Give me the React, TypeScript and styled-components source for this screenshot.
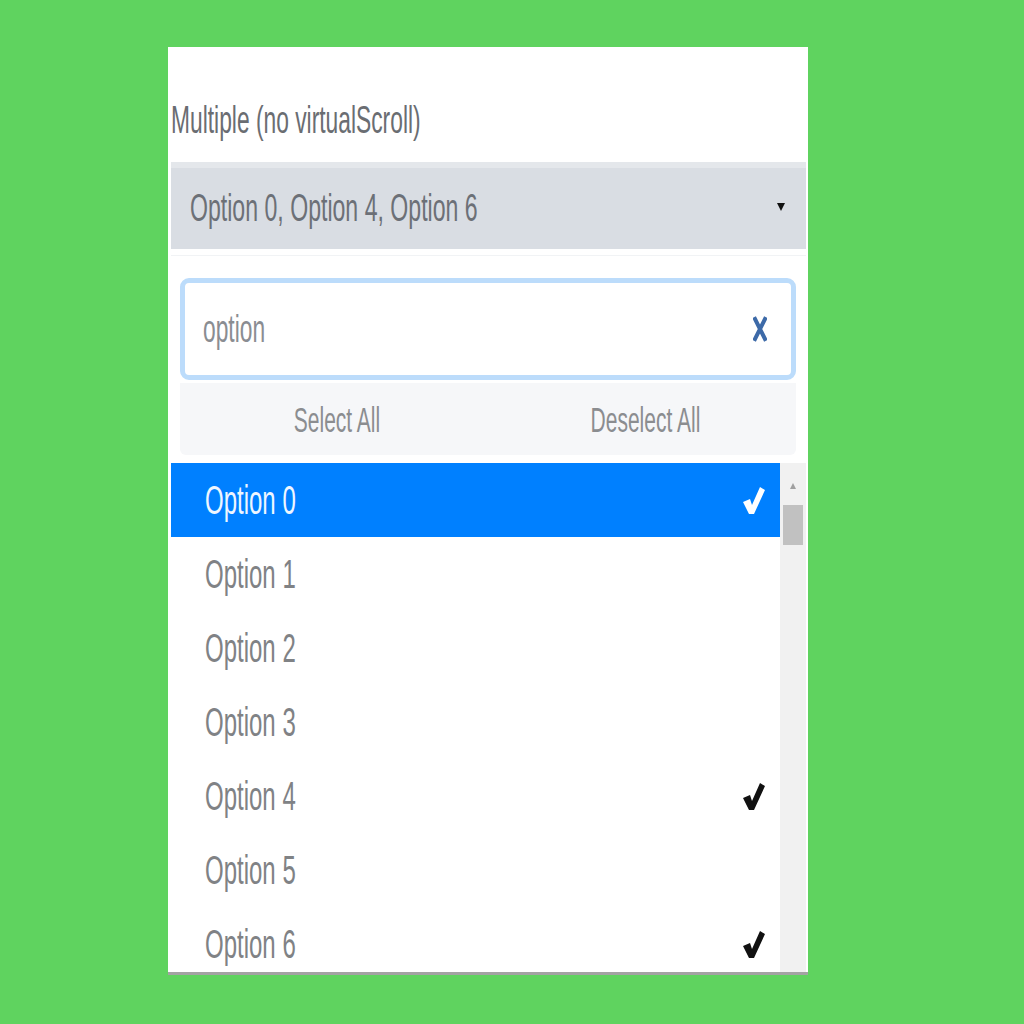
import { ReactElement } from 'react';
import styled, { createGlobalStyle } from 'styled-components';

const GlobalStyle = createGlobalStyle`
  body {
    margin: 0;
    background: #5fd35f;
    font-family: 'Liberation Sans', Arial, sans-serif;
  }
`;

const Page = styled.div`
  padding: 47px 0 0 168px;
  min-height: 1024px;
  box-sizing: border-box;
`;

const Panel = styled.div`
  width: 640px;
  height: 928px;
  box-sizing: border-box;
  background: #fff;
  border-bottom: 3px solid #a3a3a3;
  padding: 0 2px 0 3px;
  overflow: hidden;
  display: flex;
  flex-direction: column;
`;

// the screenshot text is tall and narrow, so squeeze it horizontally
const Text = styled.span<{ $size?: number; $center?: boolean }>`
  display: inline-block;
  white-space: nowrap;
  font-size: ${(p) => p.$size ?? 36}px;
  line-height: 1;
  transform: scaleX(0.6);
  transform-origin: ${(p) => (p.$center ? 'center' : 'left')} center;
`;

const Label = styled.div`
  height: 115px;
  display: flex;
  align-items: flex-end;
  padding-bottom: 23px;
  box-sizing: border-box;
  color: #6a6d72;
`;

const SelectBox = styled.div`
  height: 87px;
  box-sizing: border-box;
  background: #d9dde3;
  border-top: 6px solid #e4e7eb;
  display: flex;
  align-items: center;
  justify-content: space-between;
  padding: 0 21px 0 19px;
  color: #6c7077;
`;

const Caret = styled.span`
  width: 0;
  height: 0;
  border-left: 4px solid transparent;
  border-right: 4px solid transparent;
  border-top: 8px solid #111;
  margin-top: -4px;
`;

const Dropdown = styled.div`
  flex: 1;
  min-height: 0;
  display: flex;
  flex-direction: column;
  margin-top: 6px;
  border-top: 1px solid #f1f3f5;
  padding-top: 22px;
`;

const SearchWrap = styled.div`
  margin: 0 10px 0 9px;
  height: 102px;
  box-sizing: border-box;
  border: 5px solid #bcdcfb;
  border-radius: 9px;
  display: flex;
  align-items: center;
  justify-content: space-between;
  padding: 0 24px 0 18px;
  color: #8a8d92;
`;

const Actions = styled.div`
  margin: 3px 10px 0 9px;
  height: 72px;
  background: #f6f7f9;
  border-radius: 0 0 6px 6px;
  display: grid;
  grid-template-columns: 1fr 1fr;
  align-items: center;
  color: #8b8d90;
`;

const ActionButton = styled.div`
  display: flex;
  justify-content: center;
  padding-left: 6px;
`;

const ListArea = styled.div`
  margin-top: 8px;
  flex: 1;
  min-height: 0;
  display: flex;
  overflow: hidden;
`;

const List = styled.div`
  flex: 1;
  display: flex;
  flex-direction: column;
`;

const Row = styled.div<{ $active?: boolean }>`
  height: 74px;
  flex: none;
  display: flex;
  align-items: center;
  justify-content: space-between;
  padding: 0 14px 0 34px;
  background: ${(p) => (p.$active ? '#0080ff' : '#fff')};
  color: ${(p) => (p.$active ? '#eef6ff' : '#808285')};
`;

const Scrollbar = styled.div`
  width: 26px;
  flex: none;
  background: #f1f1f1;
  display: flex;
  flex-direction: column;
  align-items: center;
  padding-top: 20px;
  gap: 16px;
`;

const ArrowUp = styled.span`
  width: 0;
  height: 0;
  border-left: 3px solid transparent;
  border-right: 3px solid transparent;
  border-bottom: 6px solid #a0a0a0;
`;

const Thumb = styled.div`
  width: 20px;
  height: 40px;
  background: #c1c1c1;
`;

const Check = ({ color }: { color: string }): ReactElement => (
  <svg width="24" height="30" viewBox="0 0 24 30">
    <path d="M1 17 L8 14 L10 20 L18 2 L23 5 L12 29 L7 29 Z" fill={color} />
  </svg>
);

const ClearIcon = (): ReactElement => (
  <svg width="14" height="26" viewBox="0 0 14 26">
    <path d="M2 3 L12 23 M12 3 L2 23" stroke="#3d6aa8" strokeWidth="4" strokeLinecap="square" />
  </svg>
);

const options = ['Option 0', 'Option 1', 'Option 2', 'Option 3', 'Option 4', 'Option 5', 'Option 6'];
const selected = [0, 4, 6];

const App = (): ReactElement => (
  <Page>
    <GlobalStyle />
    <Panel>
      <Label>
        <Text $size={38}>Multiple (no virtualScroll)</Text>
      </Label>
      <SelectBox>
        <Text $size={38.5}>Option 0, Option 4, Option 6</Text>
        <Caret />
      </SelectBox>
      <Dropdown>
        <SearchWrap>
          <Text $size={38}>option</Text>
          <ClearIcon />
        </SearchWrap>
        <Actions>
          <ActionButton>
            <Text $size={35} $center>Select All</Text>
          </ActionButton>
          <ActionButton>
            <Text $size={35} $center>Deselect All</Text>
          </ActionButton>
        </Actions>
        <ListArea>
          <List>
            {options.map((o, i) => (
              <Row key={o} $active={i === 0}>
                <Text $size={40}>{o}</Text>
                {selected.includes(i) && <Check color={i === 0 ? '#fff' : '#111'} />}
              </Row>
            ))}
          </List>
          <Scrollbar>
            <ArrowUp />
            <Thumb />
          </Scrollbar>
        </ListArea>
      </Dropdown>
    </Panel>
  </Page>
);

export default App;
